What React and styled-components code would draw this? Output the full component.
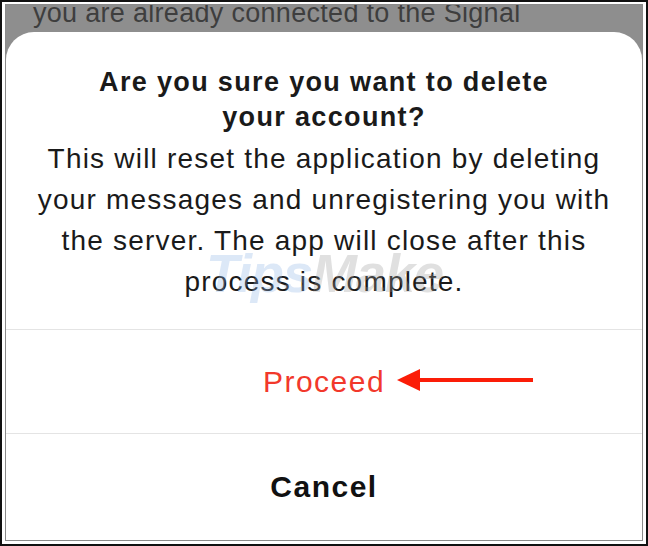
import React from 'react';
import styled, { createGlobalStyle } from 'styled-components';

const GlobalStyle = createGlobalStyle`
  html, body {
    margin: 0;
    padding: 0;
    background: #fff;
  }
  * {
    box-sizing: border-box;
  }
`;

const Frame = styled.div`
  width: 648px;
  height: 546px;
  border: 2px solid #111;
  padding: 2px 3px 3px 3px;
  background: #fff;
`;

const Screen = styled.div`
  height: 100%;
  display: flex;
  flex-direction: column;
  border: 1px solid #8a8a8a;
  background: #8e8e8e;
  overflow: hidden;
  font-family: 'Liberation Sans', Arial, sans-serif;
`;

const Behind = styled.div`
  height: 32px;
  flex-shrink: 0;
  padding-left: 27px;
  color: #3e3e3e;
  font-size: 27px;
  letter-spacing: 0.3px;
  line-height: 27px;
  margin-top: -5px;
  white-space: nowrap;
`;

const Sheet = styled.div`
  flex: 1;
  display: flex;
  flex-direction: column;
  background: #fff;
  border-radius: 28px 28px 0 0;
`;

const Message = styled.div`
  padding: 33px 10px 27px;
  text-align: center;
  color: #1a1a1a;
  position: relative;
  white-space: nowrap;
`;

const Title = styled.div`
  font-weight: 700;
  font-size: 27px;
  letter-spacing: 1.35px;
  line-height: 35px;
`;

const Body = styled.div`
  margin-top: 3px;
  font-size: 28px;
  letter-spacing: 1.2px;
  line-height: 41px;
`;

const Action = styled.div`
  position: relative;
  display: flex;
  align-items: center;
  justify-content: center;
  flex: ${(p) => (p.$fill ? 1 : 'none')};
  height: ${(p) => (p.$fill ? 'auto' : '104px')};
  border-top: 1px solid #e4e4e4;
  font-size: 30px;
  letter-spacing: 1.5px;
  font-weight: ${(p) => (p.$bold ? 700 : 400)};
  color: ${(p) => p.$color};
`;

const Arrow = styled.svg`
  position: absolute;
  left: 387px;
  top: 37px;
`;

const Watermark = styled.div`
  position: absolute;
  left: 200px;
  top: 210px;
  font-size: 54px;
  font-weight: 700;
  font-style: italic;
  letter-spacing: -1px;
  opacity: 0.3;
  pointer-events: none;
  span:first-child {
    color: #8fb4e6;
  }
  span:last-child {
    color: #9a9a9a;
  }
`;

export default function App() {
  return (
    <>
      <GlobalStyle />
      <Frame>
        <Screen>
          <Behind>you are already connected to the Signal</Behind>
          <Sheet>
            <Message>
              <Title>
                Are you sure you want to delete
                <br />
                your account?
              </Title>
              <Body>
                This will reset the application by deleting
                <br />
                your messages and unregistering you with
                <br />
                the server. The app will close after this
                <br />
                process is complete.
              </Body>
              <Watermark>
                <span>Tips</span>
                <span>Make</span>
              </Watermark>
            </Message>
            <Action $color="#f2382b">
              Proceed
              <Arrow width="145" height="26" viewBox="0 0 145 26">
                <polygon points="4,13 27,2 27,24" fill="#fb1d08" />
                <rect x="25" y="11" width="115" height="4" fill="#fb1d08" />
              </Arrow>
            </Action>
            <Action $fill $bold $color="#111">
              Cancel
            </Action>
          </Sheet>
        </Screen>
      </Frame>
    </>
  );
}
